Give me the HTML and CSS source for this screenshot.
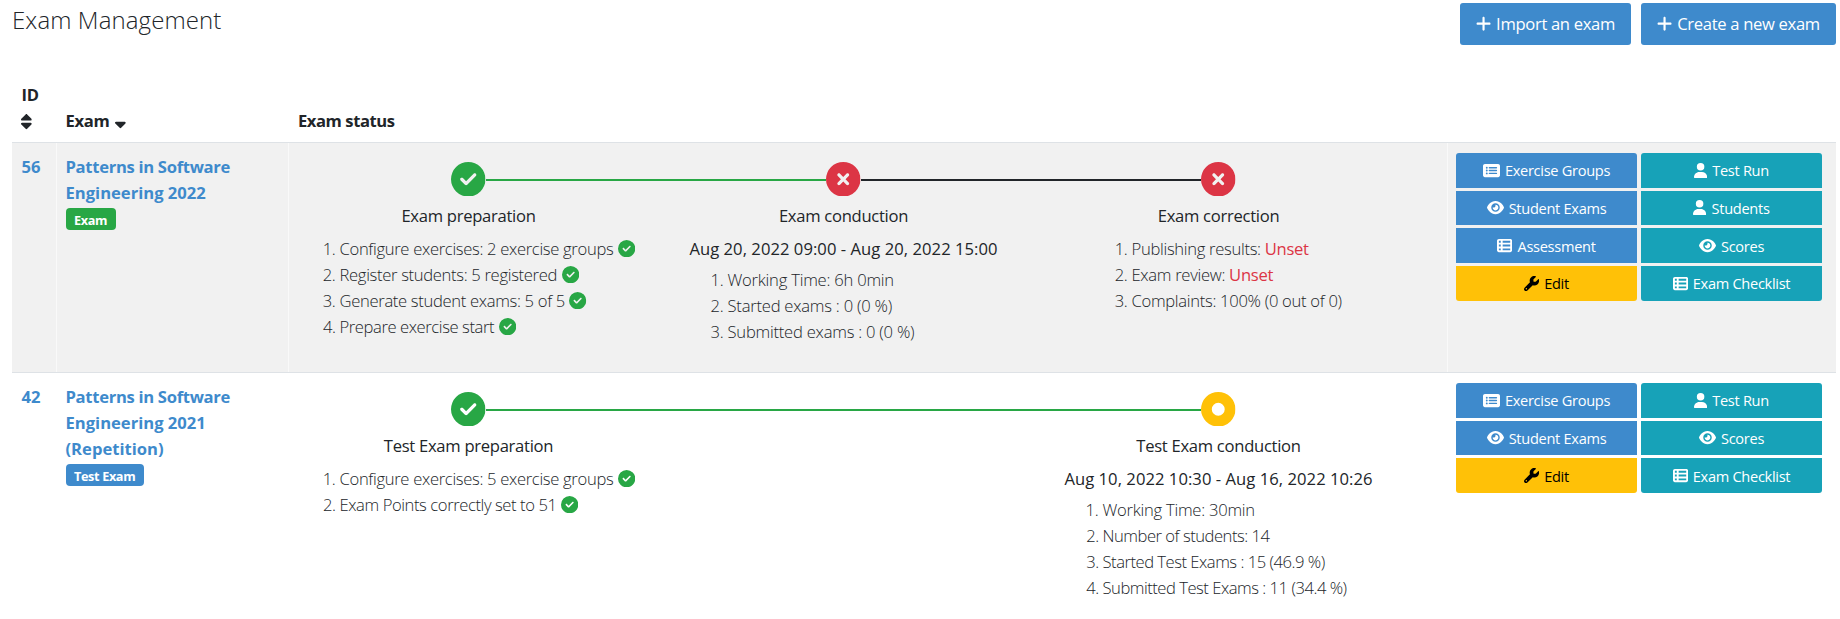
FILE: index.html
```
<!DOCTYPE html>
<html lang="en">
<head>
<meta charset="utf-8">
<title>Exam Management</title>
<link rel="stylesheet" href="styles.css">
</head>
<body>
<svg class="sprite" aria-hidden="true">
  <symbol id="plus" viewBox="0 0 448 512"><path d="M256 80c0-17.7-14.3-32-32-32s-32 14.3-32 32V224H48c-17.7 0-32 14.3-32 32s14.3 32 32 32H192V432c0 17.7 14.3 32 32 32s32-14.3 32-32V288H400c17.7 0 32-14.3 32-32s-14.3-32-32-32H256V80z"/></symbol>
  <symbol id="check" viewBox="0 0 512 512"><path d="M256 512A256 256 0 1 0 256 0a256 256 0 1 0 0 512zM369 209L241 337c-9.4 9.4-24.6 9.4-33.9 0l-64-64c-9.4-9.4-9.4-24.6 0-33.9s24.6-9.4 33.9 0l47 47L335 175c9.4-9.4 24.6-9.4 33.9 0s9.4 24.6 0 33.9z"/></symbol>
  <symbol id="xmark" viewBox="0 0 512 512"><path d="M256 512A256 256 0 1 0 256 0a256 256 0 1 0 0 512zM175 175c9.4-9.4 24.6-9.4 33.9 0l47 47 47-47c9.4-9.4 24.6-9.4 33.9 0s9.4 24.6 0 33.9l-47 47 47 47c9.4 9.4 9.4 24.6 0 33.9s-24.6 9.4-33.9 0l-47-47-47 47c-9.4 9.4-24.6 9.4-33.9 0s-9.4-24.6 0-33.9l47-47-47-47c-9.4-9.4-9.4-24.6 0-33.9z"/></symbol>
  <symbol id="dot" viewBox="0 0 512 512"><path fill-rule="evenodd" d="M256 512A256 256 0 1 0 256 0a256 256 0 1 0 0 512zM256 352a96 96 0 1 1 0-192 96 96 0 1 1 0 192z"/></symbol>
  <symbol id="groups" viewBox="0 0 576 512"><path fill-rule="evenodd" d="M64 32H512c35.3 0 64 28.7 64 64V416c0 35.3-28.7 64-64 64H64c-35.3 0-64-28.7-64-64V96c0-35.3 28.7-64 64-64zM128 128a32 32 0 1 0 0 64 32 32 0 1 0 0-64zM128 224a32 32 0 1 0 0 64 32 32 0 1 0 0-64zM128 320a32 32 0 1 0 0 64 32 32 0 1 0 0-64zM216 136c-13.300 0-24 10.700-24 24s10.700 24 24 24H456c13.300 0 24-10.700 24-24s-10.700-24-24-24zM216 232c-13.300 0-24 10.700-24 24s10.700 24 24 24H456c13.300 0 24-10.700 24-24s-10.700-24-24-24zM216 328c-13.300 0-24 10.700-24 24s10.700 24 24 24H456c13.300 0 24-10.700 24-24s-10.700-24-24-24z"/></symbol>
  <symbol id="eye" viewBox="0 0 576 512"><path d="M288 32c-80.800 0-145.500 36.800-192.600 80.600C48.600 156 17.300 208 2.500 243.700c-3.300 7.900-3.300 16.700 0 24.600C17.300 304 48.600 356 95.400 399.400C142.500 443.200 207.200 480 288 480s145.500-36.800 192.600-80.600c46.800-43.500 78.100-95.400 93-131.100c3.300-7.900 3.300-16.700 0-24.600c-14.900-35.700-46.200-87.700-93-131.100C433.500 68.800 368.800 32 288 32zM144 256a144 144 0 1 1 288 0 144 144 0 1 1 -288 0zm144-64c0 35.300-28.700 64-64 64c-7.100 0-13.900-1.200-20.300-3.300c-5.500-1.800-11.900 1.600-11.700 7.400c.3 6.900 1.300 13.800 3.200 20.700c13.700 51.200 66.400 81.600 117.600 67.900s81.600-66.400 67.900-117.600c-11.100-41.500-47.800-69.400-88.600-71.100c-5.800-.2-9.200 6.100-7.400 11.700c2.100 6.400 3.300 13.200 3.300 20.300z"/></symbol>
  <symbol id="list" viewBox="0 0 512 512"><path fill-rule="evenodd" d="M0 96C0 60.700 28.700 32 64 32H448c35.300 0 64 28.700 64 64V416c0 35.300-28.700 64-64 64H64c-35.300 0-64-28.700-64-64V96zm64 0v64h64V96H64zm384 0H192v64H448V96zM64 224v64h64V224H64zm384 0H192v64H448V224zM64 352v64h64V352H64zm384 0H192v64H448V352z"/></symbol>
  <symbol id="wrench" viewBox="0 0 512 512"><path fill-rule="evenodd" d="M352 320c88.400 0 160-71.600 160-160c0-15.300-2.200-30.100-6.200-44.200c-3.100-10.800-16.400-13.200-24.300-5.300l-76.800 76.800c-3 3-7.100 4.700-11.300 4.700H336c-8.800 0-16-7.200-16-16V118.600c0-4.200 1.700-8.300 4.700-11.300l76.800-76.800c7.900-7.900 5.400-21.200-5.300-24.300C382.100 2.200 367.300 0 352 0C263.600 0 192 71.600 192 160c0 19.100 3.400 37.500 9.500 54.500L19.900 396.100C7.200 408.800 0 426.100 0 444.100C0 481.600 30.400 512 67.900 512c18 0 35.300-7.200 48-19.900L297.500 310.500c17 6.200 35.400 9.500 54.500 9.500zM80 408a24 24 0 1 1 0 48 24 24 0 1 1 0-48z"/></symbol>
  <symbol id="user" viewBox="0 0 448 512"><path d="M224 256A128 128 0 1 0 224 0a128 128 0 1 0 0 256zm-45.700 48C79.800 304 0 383.800 0 482.300C0 498.700 13.300 512 29.700 512H418.300c16.400 0 29.700-13.300 29.700-29.700C448 383.800 368.200 304 269.700 304H178.300z"/></symbol>
  <symbol id="sort" viewBox="0 0 320 512"><path d="M137.400 41.400c12.500-12.500 32.800-12.500 45.300 0l128 128c9.200 9.200 11.900 22.900 6.900 34.900s-16.600 19.800-29.600 19.800H32c-12.900 0-24.600-7.800-29.600-19.800s-2.200-25.700 6.900-34.900l128-128zm0 429.300l-128-128c-9.200-9.200-11.900-22.900-6.900-34.900s16.600-19.800 29.600-19.800H288c12.900 0 24.600 7.800 29.600 19.800s2.200 25.700-6.900 34.900l-128 128c-12.500 12.500-32.800 12.500-45.300 0z"/></symbol>
  <symbol id="sort-down" viewBox="0 0 320 512"><path d="M137.400 470.700l-128-128c-9.200-9.200-11.900-22.900-6.900-34.900s16.600-19.800 29.600-19.800H288c12.900 0 24.600 7.800 29.600 19.800s2.200 25.700-6.900 34.900l-128 128c-12.500 12.500-32.800 12.500-45.300 0z"/></symbol>
</svg>

<header class="topbar">
  <h1 class="title">Exam Management</h1>
  <div class="actions">
    <a class="btn import"><svg class="i-plus"><use href="#plus"/></svg><span>Import an exam</span></a>
    <a class="btn create"><svg class="i-plus"><use href="#plus"/></svg><span>Create a new exam</span></a>
  </div>
</header>

<main class="table">
  <div class="row head">
    <div class="cell">ID<br><svg class="i-sort"><use href="#sort"/></svg></div>
    <div class="cell">Exam <svg class="i-sort down"><use href="#sort-down"/></svg></div>
    <div class="cell head-status">Exam status</div>
    <div class="cell"></div>
  </div>

  <div class="row first">
    <div class="cell link">56</div>
    <div class="cell link"><span class="name">Patterns in Software</span><br>Engineering 2022<br><span class="badge success">Exam</span></div>
    <div class="cell status">
      <div class="stepper">
        <section class="step">
          <div class="mark done to-next"><svg><use href="#check"/></svg></div>
          <div class="label">Exam preparation</div>
          <ol class="list l-prep">
            <li>Configure exercises: 2 exercise groups <svg class="ok"><use href="#check"/></svg></li>
            <li>Register students: 5 registered <svg class="ok"><use href="#check"/></svg></li>
            <li>Generate student exams: 5 of 5 <svg class="ok"><use href="#check"/></svg></li>
            <li class="tight">Prepare exercise start <svg class="ok"><use href="#check"/></svg></li>
          </ol>
        </section>
        <section class="step">
          <div class="mark failed from-prev to-next"><svg><use href="#xmark"/></svg></div>
          <div class="label">Exam conduction</div>
          <div class="date">Aug 20, 2022 09:00 - Aug 20, 2022 15:00</div>
          <ol class="list l-cond">
            <li>Working Time: 6h 0min</li>
            <li>Started exams : 0 (0 %)</li>
            <li>Submitted exams : 0 (0 %)</li>
          </ol>
        </section>
        <section class="step">
          <div class="mark failed from-prev dark"><svg><use href="#xmark"/></svg></div>
          <div class="label">Exam correction</div>
          <ol class="list l-corr">
            <li>Publishing results: <span class="unset">Unset</span></li>
            <li>Exam review: <span class="unset">Unset</span></li>
            <li>Complaints: 100% (0 out of 0)</li>
          </ol>
        </section>
      </div>
    </div>
    <div class="cell tools">
      <div class="group">
        <a class="tool blue"><svg class="i-wide"><use href="#groups"/></svg><span>Exercise Groups</span></a>
        <a class="tool blue"><svg class="i-wide"><use href="#eye"/></svg><span>Student Exams</span></a>
        <a class="tool blue"><svg class="i-sq"><use href="#list"/></svg><span>Assessment</span></a>
        <a class="tool yellow"><svg class="i-sq"><use href="#wrench"/></svg><span>Edit</span></a>
      </div>
      <div class="group">
        <a class="tool teal"><svg class="i-user"><use href="#user"/></svg><span>Test Run</span></a>
        <a class="tool teal"><svg class="i-user"><use href="#user"/></svg><span>Students</span></a>
        <a class="tool teal"><svg class="i-wide"><use href="#eye"/></svg><span>Scores</span></a>
        <a class="tool teal"><svg class="i-sq"><use href="#list"/></svg><span>Exam Checklist</span></a>
      </div>
    </div>
  </div>

  <div class="row second">
    <div class="cell link">42</div>
    <div class="cell link"><span class="name">Patterns in Software</span><br>Engineering 2021<br>(Repetition)<br><span class="badge primary">Test Exam</span></div>
    <div class="cell status">
      <div class="stepper">
        <section class="step">
          <div class="mark done to-next"><svg><use href="#check"/></svg></div>
          <div class="label">Test Exam preparation</div>
          <ol class="list l-prep">
            <li>Configure exercises: 5 exercise groups <svg class="ok"><use href="#check"/></svg></li>
            <li class="tight">Exam Points correctly set to 51 <svg class="ok"><use href="#check"/></svg></li>
          </ol>
        </section>
        <div class="gap"></div>
        <section class="step">
          <div class="mark active from-prev"><svg><use href="#dot"/></svg></div>
          <div class="label">Test Exam conduction</div>
          <div class="date">Aug 10, 2022 10:30 - Aug 16, 2022 10:26</div>
          <ol class="list l-cond l-test">
            <li class="loose">Working Time: 30min</li>
            <li>Number of students: 14</li>
            <li>Started Test Exams : 15 (46.9 %)</li>
            <li>Submitted Test Exams : 11 (34.4 %)</li>
          </ol>
        </section>
      </div>
    </div>
    <div class="cell tools">
      <div class="group">
        <a class="tool blue"><svg class="i-wide"><use href="#groups"/></svg><span>Exercise Groups</span></a>
        <a class="tool blue"><svg class="i-wide"><use href="#eye"/></svg><span>Student Exams</span></a>
        <a class="tool yellow"><svg class="i-sq"><use href="#wrench"/></svg><span>Edit</span></a>
      </div>
      <div class="group">
        <a class="tool teal"><svg class="i-user"><use href="#user"/></svg><span>Test Run</span></a>
        <a class="tool teal"><svg class="i-wide"><use href="#eye"/></svg><span>Scores</span></a>
        <a class="tool teal"><svg class="i-sq"><use href="#list"/></svg><span>Exam Checklist</span></a>
      </div>
    </div>
  </div>
</main>
</body>
</html>
```
FILE: styles.css
```
* { box-sizing: border-box; }
body {
  margin: 0;
  background: #fff;
  color: #212529;
  font: 400 16.6px/26px "Open Sans", "Noto Sans", sans-serif;
  letter-spacing: -0.32px;
  overflow: hidden;
}
svg { fill: currentColor; }
.sprite { display: none; }

.topbar {
  display: flex;
  justify-content: space-between;
  height: 78px;
  padding: 3px 4px 0 12px;
}
.title {
  margin: 0;
  font-size: 24px;
  font-weight: 300;
  line-height: 34px;
  letter-spacing: 0.1px;
}
.actions { display: flex; gap: 10px; }
.btn {
  display: flex;
  align-items: center;
  justify-content: center;
  gap: 5px;
  height: 42px;
  border-radius: 3px;
  background: #3e8acc;
  color: #fff;
}
.import { width: 171px; }
.create { width: 195px; }
.i-plus { width: 15.1px; height: 17.3px; }

.table { margin: 0 4px 0 12px; }
.row {
  display: grid;
  grid-template-columns: 44px 232px 1159px 1fr;
}
.cell { padding: 11px 8px 0 9.5px; }
.head {
  height: 65px;
  align-items: end;
  border-bottom: 1px solid #dee2e6;
  font-weight: 700;
}
.head .cell { padding: 0 9.5px 8px; }
.head .head-status { padding-left: 10px; letter-spacing: -0.43px; }
.i-sort { width: 10.8px; height: 17.25px; vertical-align: -3px; margin-left: -0.5px; }
.down { margin-left: 1.5px; vertical-align: -2px; }
.first { height: 230px; border-bottom: 1px solid #dee2e6; }
.first .cell { background: #f1f1f1; }
.first .cell + .cell { border-left: 1px solid #f9f9f9; }
.second .cell + .cell { border-left: 1px solid transparent; }
.link { color: #3e8acc; font-weight: 700; letter-spacing: 0; }
.cell + .link { padding-left: 8.5px; }
.name { letter-spacing: -0.3px; }
.badge {
  display: inline-block;
  height: 22px;
  margin-top: 2px;
  padding: 0 8.5px;
  border-radius: 4px;
  color: #fff;
  font-size: 12.7px;
  line-height: 24px;
  letter-spacing: -0.36px;
  vertical-align: top;
}
.success { background: #28a745; }
.primary { background: #3e8acc; }

.row .status { padding: 18px 0 0; }
.stepper {
  display: grid;
  grid-template-columns: repeat(3, 375px);
  margin-left: -8px;
}
.mark {
  display: flex;
  align-items: center;
  height: 35px;
}
.mark svg { width: 34.5px; height: 34.5px; flex: none; margin-top: 1px; }
.mark::before, .mark::after { content: ""; flex: 1; height: 2px; margin-top: 2px; }
.to-next::after, .from-prev::before { background: #28a745; }
.failed.to-next::after, .dark.from-prev::before { background: #212529; }
.gap { height: 2px; margin-top: 17.5px; background: #28a745; }
.done svg { color: #28a745; }
.failed svg { color: #dc3545; }
.active svg { color: #ffc107; }
.label { margin-top: 7px; text-align: center; letter-spacing: -0.28px; }
.date { margin-top: 7px; text-align: center; letter-spacing: 0.05px; }
.list {
  margin: 7px 0 0;
  font-weight: 300;
  letter-spacing: -0.32px;
}
.date + .list { margin-top: 5px; }
.l-prep { padding-left: 58.5px; }
.l-cond { padding-left: 71.5px; letter-spacing: -0.23px; }
.date + .l-test { letter-spacing: -0.48px; }
.l-corr { padding-left: 100.5px; letter-spacing: -0.3px; }
.tight { letter-spacing: -0.41px; }
.loose { letter-spacing: -0.25px; }
.ok { width: 17.3px; height: 17.3px; color: #28a745; vertical-align: -2px; margin-left: 0.5px; }
.unset { color: #dc3545; font-weight: 400; }

.row .tools {
  display: flex;
  align-items: start;
  gap: 4px;
  padding: 10px 0 0 8px;
}
.group {
  display: grid;
  gap: 3px;
  width: 181px;
  border-radius: 3px;
  overflow: hidden;
}
.tool {
  display: flex;
  align-items: center;
  justify-content: center;
  gap: 5px;
  height: 34.66px;
  color: #fff;
  font-size: 14.6px;
  letter-spacing: -0.3px;
}
.blue { background: #3e8acc; }
.teal { background: #17a2b8; }
.yellow { background: #ffc107; color: #000; }
.i-wide { width: 17px; height: 15.1px; }
.i-sq { width: 15.1px; height: 15.1px; }
.i-user { width: 13.2px; height: 15.1px; }
```
